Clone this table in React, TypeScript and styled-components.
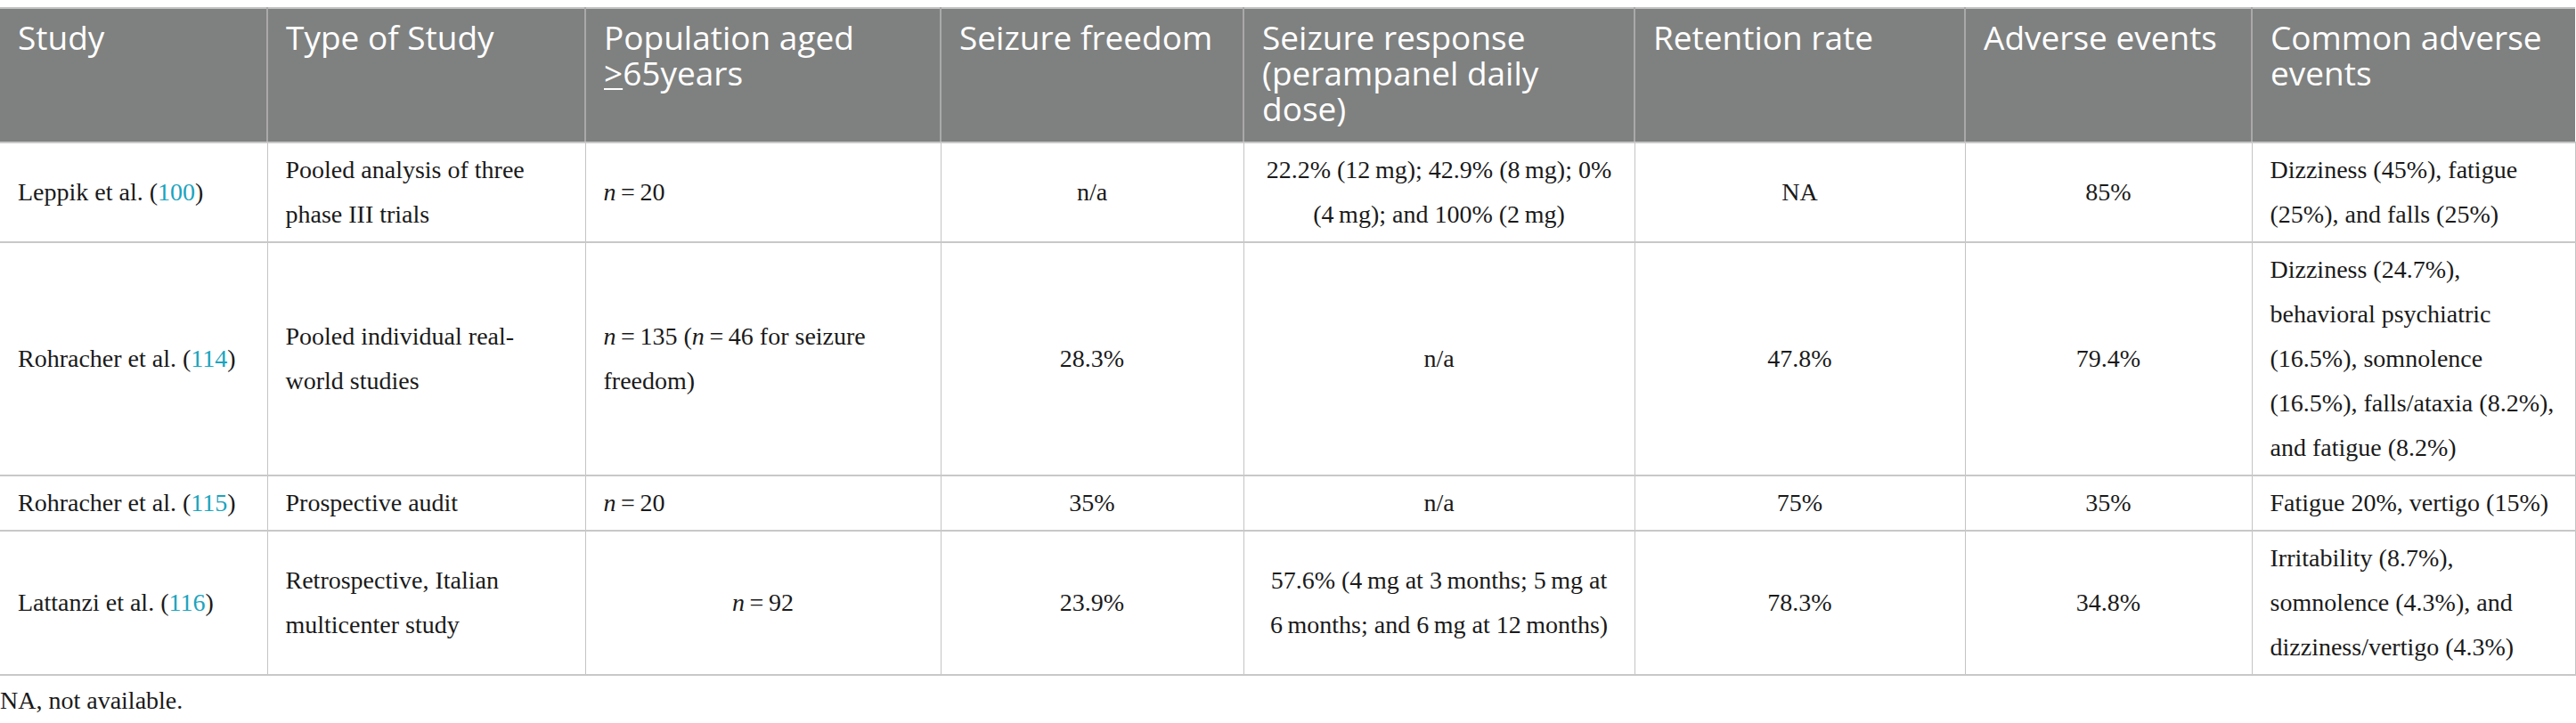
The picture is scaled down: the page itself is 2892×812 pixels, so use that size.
import React from "react"
import styled, { createGlobalStyle } from "styled-components"

const GlobalStyle = createGlobalStyle`
  html, body {
    margin: 0;
    padding: 0;
    background: #ffffff;
  }
`

type Align = "left" | "center"
type CellData = { content: React.ReactNode; align?: Align }

const Page = styled.div`
  padding-top: 8px;
  width: 2892px;
`

const Table = styled.table`
  table-layout: fixed;
  width: 2891px;
  border-collapse: collapse;
  border-top: 2px solid #c2c2c2;
  border-bottom: 2px solid #c8c8c8;
`

const Col = styled.col<{ $w: number }>`
  width: ${p => p.$w}px;
`

const HeadRow = styled.tr`
  background-color: #7f8180;
`

const HeadCell = styled.th`
  height: 137px;
  padding: 12px 20px 0;
  vertical-align: top;
  text-align: left;
  font-family: "Open Sans", "Noto Sans", sans-serif;
  font-weight: 400;
  font-size: 37px;
  line-height: 40px;
  color: #ffffff;
  border-left: 2px solid #a9a9a9;
  border-bottom: 2px solid #c8c8c8;

  &:first-child {
    border-left: none;
  }
`

const Ge = styled.span`
  text-decoration: underline;
  text-decoration-thickness: 2px;
  text-underline-offset: 3px;
`

const BodyRow = styled.tr`
  border-bottom: 2px solid #c8c8c8;
`

const Cell = styled.td<{ $align: Align }>`
  padding: 5px 20px;
  vertical-align: middle;
  text-align: ${p => p.$align};
  font-family: "Liberation Serif", "Times New Roman", serif;
  font-size: 28px;
  line-height: 50px;
  color: #1a1a1a;
  border-left: 1px solid #c4c4c4;
  border-right: 1px solid #c4c4c4;

  &:first-child {
    border-left: none;
  }
`

const Em = styled.i`
  font-style: italic;
`

const Ref = styled.span`
  color: #1ba4be;
`

const Footnote = styled.p`
  margin: 8px 0 0;
  font-family: "Liberation Serif", "Times New Roman", serif;
  font-size: 28px;
  line-height: 40px;
  color: #1a1a1a;
`

const COLS = [300, 357, 399, 340, 439, 371, 322, 363]

const N = () => <Em>n</Em>
const eq = "\u2009=\u2009"
const mg = "\u2009mg"

const getHeaders = (): React.ReactNode[] => [
  "Study",
  "Type of Study",
  <>Population aged <Ge>&gt;</Ge>65years</>,
  "Seizure freedom",
  "Seizure response (perampanel daily dose)",
  "Retention rate",
  "Adverse events",
  "Common adverse events",
]

const getRows = (): CellData[][] => [
  [
    { content: <>Leppik et al. (<Ref>100</Ref>)</> },
    { content: "Pooled analysis of three phase III trials" },
    { content: <><N />{eq}20</> },
    { content: "n/a", align: "center" },
    { content: `22.2% (12${mg}); 42.9% (8${mg}); 0% (4${mg}); and 100% (2${mg})`, align: "center" },
    { content: "NA", align: "center" },
    { content: "85%", align: "center" },
    { content: "Dizziness (45%), fatigue (25%), and falls (25%)" },
  ],
  [
    { content: <>Rohracher et al. (<Ref>114</Ref>)</> },
    { content: "Pooled individual real-world studies" },
    { content: <><N />{eq}135 (<N />{eq}46 for seizure freedom)</> },
    { content: "28.3%", align: "center" },
    { content: "n/a", align: "center" },
    { content: "47.8%", align: "center" },
    { content: "79.4%", align: "center" },
    { content: "Dizziness (24.7%), behavioral psychiatric (16.5%), somnolence (16.5%), falls/ataxia (8.2%), and fatigue (8.2%)" },
  ],
  [
    { content: <>Rohracher et al. (<Ref>115</Ref>)</> },
    { content: "Prospective audit" },
    { content: <><N />{eq}20</> },
    { content: "35%", align: "center" },
    { content: "n/a", align: "center" },
    { content: "75%", align: "center" },
    { content: "35%", align: "center" },
    { content: "Fatigue 20%, vertigo (15%)" },
  ],
  [
    { content: <>Lattanzi et al. (<Ref>116</Ref>)</> },
    { content: "Retrospective, Italian multicenter study" },
    { content: <><N />{eq}92</>, align: "center" },
    { content: "23.9%", align: "center" },
    { content: `57.6% (4${mg} at 3\u2009months; 5${mg} at 6\u2009months; and 6${mg} at 12\u2009months)`, align: "center" },
    { content: "78.3%", align: "center" },
    { content: "34.8%", align: "center" },
    { content: "Irritability (8.7%), somnolence (4.3%), and dizziness/vertigo (4.3%)" },
  ],
]

export default function App() {
  const headers = getHeaders()
  const rows = getRows()
  return (
    <Page>
      <GlobalStyle />
      <Table>
        <colgroup>
          {COLS.map((w, i) => <Col key={i} $w={w} />)}
        </colgroup>
        <thead>
          <HeadRow>
            {headers.map((h, i) => <HeadCell key={i}>{h}</HeadCell>)}
          </HeadRow>
        </thead>
        <tbody>
          {rows.map((row, r) => (
            <BodyRow key={r}>
              {row.map((c, i) => <Cell key={i} $align={c.align || "left"}>{c.content}</Cell>)}
            </BodyRow>
          ))}
        </tbody>
      </Table>
      <Footnote>NA, not available.</Footnote>
    </Page>
  )
}
